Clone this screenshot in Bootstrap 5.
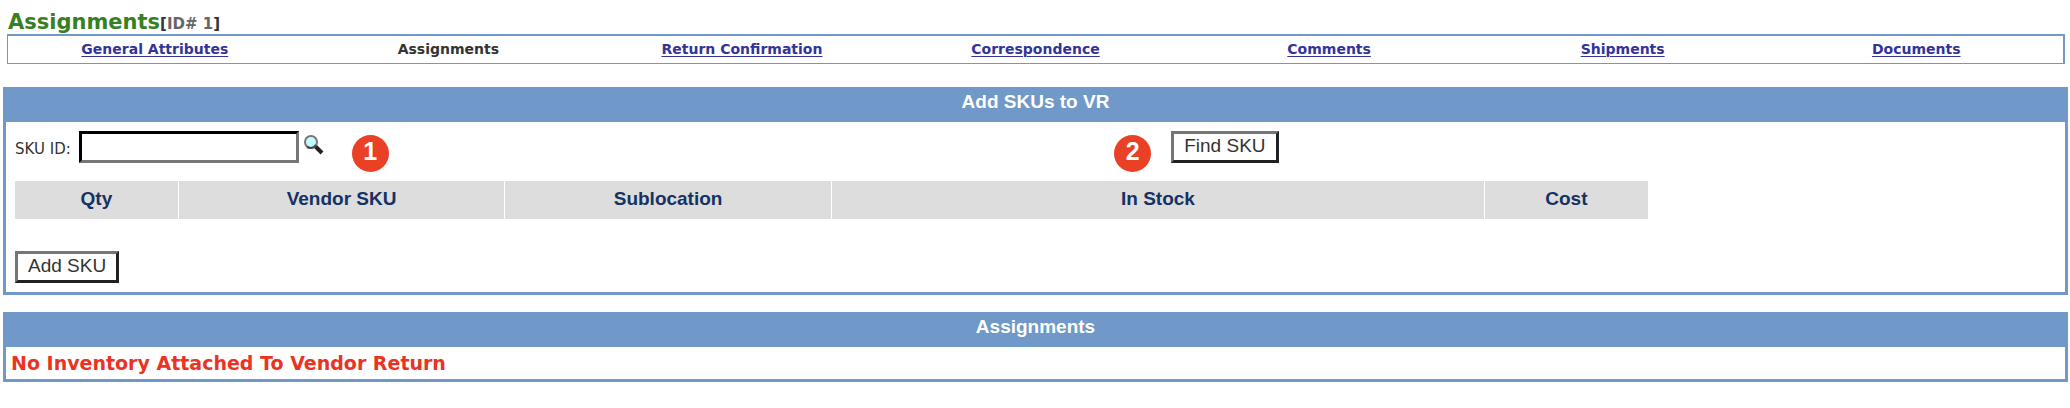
<!DOCTYPE html>
<html lang="en">
<head>
<meta charset="utf-8">
<meta name="viewport" content="width=device-width, initial-scale=1">
<title>Assignments</title>
<link href="https://cdn.jsdelivr.net/npm/bootstrap@5.3.0/dist/css/bootstrap.min.css" rel="stylesheet">
<style>
  body { font-family: "DejaVu Sans", Verdana, sans-serif; font-size: 15px; line-height: 20px; color: #333; background: #fff; }
  .page-wrap { padding: 10px 2px 24px 3px; }
  .page-title { font-size: 21px; line-height: 24px; color: #38801f; padding-left: 5px; }
  .record-id { font-size: 15px; line-height: 1; color: #333; }
  .record-id span { color: #666; }
  .tab-strip { margin: 0 3px 23px 4px; border: solid #7098c8; border-width: 2px 2px 1px 1px; font-size: 14px; line-height: 27px; }
  .tab-strip a { color: #339; text-underline-offset: 2px; text-decoration-thickness: 1px; }
  .panel { border: 3px solid #7098c8; margin-bottom: 17px; }
  .panel-title { background: #7098c8; color: #fff; font: bold 19px/24px "Liberation Sans", Arial, sans-serif; padding-bottom: 8px; }
  .panel-main { padding: 9px; }
  .search-side { width: 56.65%; }
  .sku-input { width: 220px; height: 32px; border: 3px inset #767676; border-color: #212121 #767676 #767676 #212121; padding: 1px 4px; font: 18px "Liberation Sans", Arial, sans-serif; }
  .push-btn { height: 32px; border: 3px solid; border-color: #767676 #212121 #212121 #767676; background: #fff; color: #333; font: 19px/24px "Liberation Sans", Arial, sans-serif; padding: 0 10px 2px; }
  .lookup { border: 0; padding: 0; background: none; }
  .step { width: 37px; height: 37px; margin: 0 20px 0 28px; border-radius: 50%; background: #ea4025; color: #fff; font: bold 25px/33px "Liberation Sans", Arial, sans-serif; text-align: center; }
  .sku-table { width: 80%; table-layout: fixed; margin-top: 9px; font: bold 19px/24px "Liberation Sans", Arial, sans-serif; }
  .sku-table th { background: #ddd; color: #143264; padding: 6px 0 8px; border-right: 1px solid #fff; text-align: center; }
  .sku-table th:last-child { border-right: 0; }
  .add-row { margin-top: 32px; }
  .empty-note { color: #ea3323; font-size: 19px; line-height: 24px; padding: 4px 5px; }
</style>
</head>
<body>
<div class="page-wrap">
  <header>
    <h1 class="page-title fw-bold m-0">Assignments<span class="record-id">[<span>ID# 1</span>]</span></h1>
    <nav class="tab-strip d-flex text-center fw-bold" aria-label="Record sections">
      <div class="col"><a href="#">General Attributes</a></div>
      <div class="col">Assignments</div>
      <div class="col"><a href="#">Return Confirmation</a></div>
      <div class="col"><a href="#">Correspondence</a></div>
      <div class="col"><a href="#">Comments</a></div>
      <div class="col"><a href="#">Shipments</a></div>
      <div class="col"><a href="#">Documents</a></div>
    </nav>
  </header>
  <main>
    <section class="panel">
      <h2 class="panel-title text-center m-0">Add SKUs to VR</h2>
      <form class="panel-main">
        <div class="d-flex align-items-start">
          <div class="search-side d-flex align-items-start">
            <label for="sku" class="pt-1 me-2 mt-1">SKU ID:</label>
            <input id="sku" type="text" class="sku-input">
            <button type="button" class="lookup d-flex ms-1 mt-1" aria-label="Look up SKU">
              <svg width="21" height="20" viewBox="0 0 21 20"><path d="M12 11l7 7" stroke="#222" stroke-width="4"/><circle cx="8" cy="7" r="6" fill="#c5fcff" stroke="#777" stroke-width="2"/><path d="M4 12a7 7 0 0 0 9-2" fill="none" stroke="#444" stroke-width="2"/></svg>
            </button>
            <div class="step mt-1">1</div>
            <div class="step ms-auto mt-1">2</div>
          </div>
          <button type="button" class="push-btn">Find SKU</button>
        </div>
        <table class="sku-table">
          <colgroup><col style="width:10%"><col style="width:20%"><col style="width:20%"><col style="width:40%"><col style="width:10%"></colgroup>
          <thead><tr><th scope="col">Qty</th><th scope="col">Vendor SKU</th><th scope="col">Sublocation</th><th scope="col">In Stock</th><th scope="col">Cost</th></tr></thead>
        </table>
        <button type="button" class="push-btn add-row d-block">Add SKU</button>
      </form>
    </section>
    <section class="panel">
      <h2 class="panel-title text-center m-0">Assignments</h2>
      <p class="empty-note fw-bold m-0">No Inventory Attached To Vendor Return</p>
    </section>
  </main>
</div>
<script src="https://cdn.jsdelivr.net/npm/bootstrap@5.3.0/dist/js/bootstrap.bundle.min.js"></script>
</body>
</html>
